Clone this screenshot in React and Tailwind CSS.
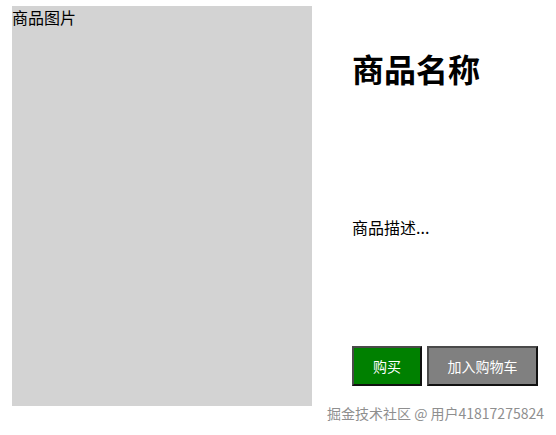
import React from 'react';

const App = () => {
  return (
    <div className="relative flex h-[435px] w-[556px] overflow-hidden bg-white font-['Noto_Sans_CJK_SC',sans-serif] text-black">
      {/* thin edge line on the left */}
      <div className="ml-[3px] w-px bg-[#ececec]" />

      <div className="flex pl-[8px] pt-[6px]">
        <div className="ml-px h-[400px] w-[300px] bg-[#d3d3d3] text-[16px] leading-[22px]">
          商品图片
        </div>

        <div className="flex h-[400px] flex-col justify-between px-[40px] py-[20px]">
          <h1 className="mt-[18px] mb-[24px] text-[32px] font-bold leading-[48px]">商品名称</h1>
          <p className="mt-[12px] mb-[20px] text-[16px] leading-[24px]">商品描述...</p>
          <div className="flex gap-[5px]">
            <button className="h-[40px] w-[70px] border-2 border-t-[#4a4a4a] border-l-[#4a4a4a] border-b-[#111] border-r-[#111] bg-[#008000] text-[14px] text-white">
              购买
            </button>
            <button className="h-[40px] w-[111px] border-2 border-t-[#4a4a4a] border-l-[#4a4a4a] border-b-[#111] border-r-[#111] bg-[#808080] text-[14px] text-white">
              加入购物车
            </button>
          </div>
        </div>
      </div>

      {/* watermark */}
      <div className="absolute right-[12px] top-[403px] text-[14px] leading-[20px] text-[#8f8f8f]">
        掘金技术社区 @ 用户41817275824
      </div>
    </div>
  );
};

export default App;
